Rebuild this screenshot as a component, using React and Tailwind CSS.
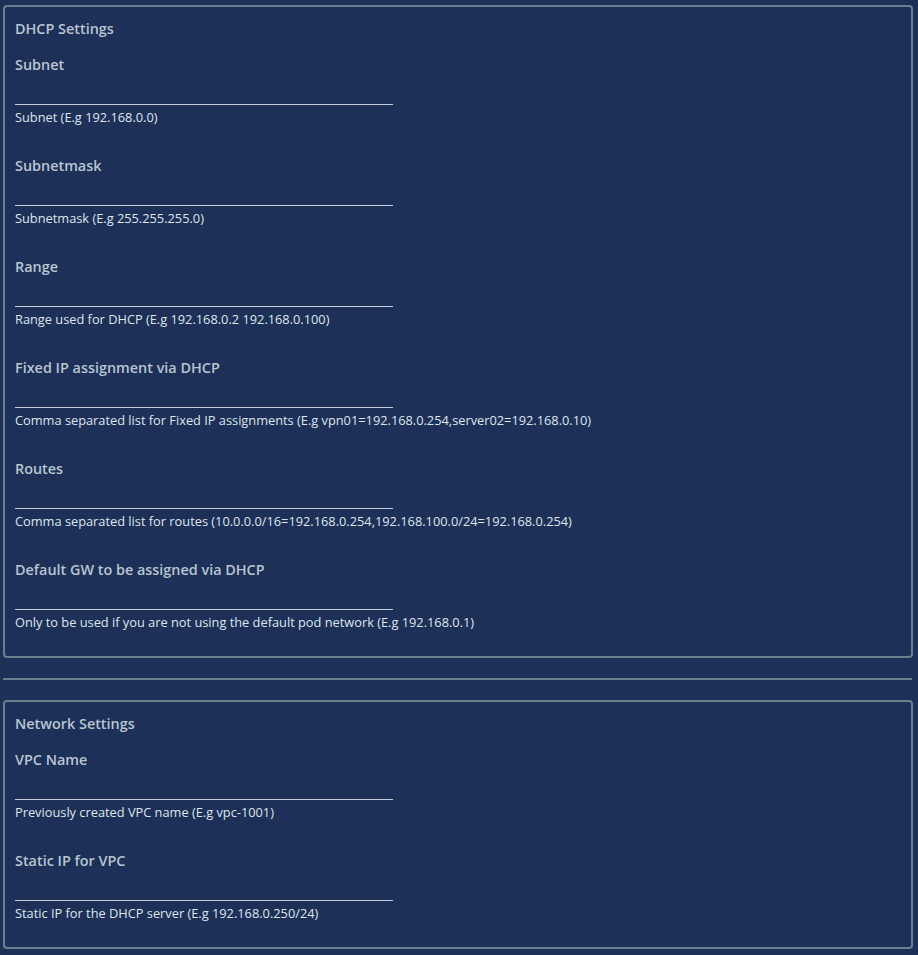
import React from "react";

const dhcp = [
  ["Subnet", "Subnet (E.g 192.168.0.0)"],
  ["Subnetmask", "Subnetmask (E.g 255.255.255.0)"],
  ["Range", "Range used for DHCP (E.g 192.168.0.2 192.168.0.100)"],
  ["Fixed IP assignment via DHCP", "Comma separated list for Fixed IP assignments (E.g vpn01=192.168.0.254,server02=192.168.0.10)"],
  ["Routes", "Comma separated list for routes (10.0.0.0/16=192.168.0.254,192.168.100.0/24=192.168.0.254)"],
  ["Default GW to be assigned via DHCP", "Only to be used if you are not using the default pod network (E.g 192.168.0.1)"],
];

const net = [
  ["VPC Name", "Previously created VPC name (E.g vpc-1001)"],
  ["Static IP for VPC", "Static IP for the DHCP server (E.g 192.168.0.250/24)"],
];

function Field({ label, help }) {
  return (
    <div className="flex flex-col">
      <div className="h-[20px] leading-[20px] text-[14.4px] font-semibold text-[#b9c5d1]">{label}</div>
      <input
        className="h-[30px] w-[378px] border-b border-[#c3ceda] bg-transparent outline-none text-[#e1e7ee] text-[13px]"
        type="text"
      />
      <div className="mt-[4px] h-[16px] leading-[16px] text-[12.8px] text-[#dfe5ec] whitespace-nowrap">{help}</div>
    </div>
  );
}

function Section({ title, fields }) {
  return (
    <div className="border-2 border-[#6c7f8d] rounded-[4px] pt-[12px] pb-[26px] px-[10px]">
      <div className="h-[20px] leading-[20px] text-[14.4px] font-semibold text-[#b9c5d1]">{title}</div>
      <div className="mt-[16px] flex flex-col gap-[31px]">
        {fields.map(([l, h]) => (
          <Field key={l} label={l} help={h} />
        ))}
      </div>
    </div>
  );
}

export default function App() {
  return (
    <div
      className="min-h-[955px] bg-[#1c3058] pt-[5px] pl-[3px] pr-[5px] pb-[6px]"
      style={{ fontFamily: '"Open Sans", "Noto Sans", sans-serif' }}
    >
      <Section title="DHCP Settings" fields={dhcp} />
      <div className="my-[20px] h-[2px] bg-[#6c7f8d] mr-[1px]" />
      <Section title="Network Settings" fields={net} />
    </div>
  );
}
